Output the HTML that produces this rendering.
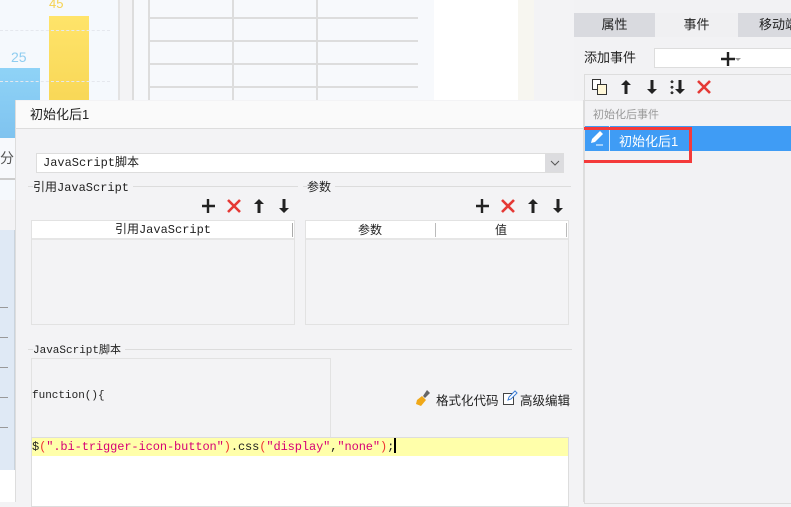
<!DOCTYPE html>
<html><head><meta charset="utf-8"><style>
*{margin:0;padding:0;box-sizing:border-box}
body{width:791px;height:502px;overflow:hidden;position:relative;background:#f3f3f5;font-family:"Liberation Sans","Noto Sans CJK SC",sans-serif;font-size:12px;color:#222}
.a{position:absolute}
.mono{font-family:"Liberation Mono","Noto Sans CJK SC",monospace}
.hl{position:absolute;height:1px;background:#dcdcdc}
</style></head><body>
<svg width="0" height="0" style="position:absolute">
<defs>
<g id="up"><path d="M6 1 L1 6 L4.5 6 L4.5 15 L7.5 15 L7.5 6 L11 6 Z" fill="#222"/></g>
<g id="dn"><path d="M6 15 L1 10 L4.5 10 L4.5 1 L7.5 1 L7.5 10 L11 10 Z" fill="#222"/></g>
<g id="pl"><path d="M6 0 V14 M-1 7 H13" stroke="#222" stroke-width="2.4"/></g>
<g id="x"><path d="M1 1 L13 13 M13 1 L1 13" stroke="#e53935" stroke-width="2.6"/></g>
</defs></svg>
<!-- background left area -->
<div class="a" style="left:0;top:0;width:120px;height:200px;background:#f5f9fd"></div>
<div class="a" style="left:0;top:68px;width:40px;height:70px;background:linear-gradient(#8fd3f7,#7fc3ef)"></div>
<div class="a" style="left:49px;top:16px;width:40px;height:120px;background:linear-gradient(#ffe46a,#f5d24f)"></div>
<div class="a" style="left:49px;top:-4px;color:#f5d24f;font-size:13px">45</div>
<div class="a" style="left:11px;top:49px;color:#8fcdf0;font-size:14px">25</div>
<div class="a" style="left:0;top:30px;width:110px;border-top:1px dashed #e5e8ee"></div>
<div class="a" style="left:0;top:81px;width:110px;border-top:1px dashed #e5e8ee"></div>
<div class="a" style="left:118px;top:0;width:2px;height:100px;background:#e3e3e3"></div>
<div class="a" style="left:132px;top:0;width:2px;height:100px;background:#ddd"></div>
<div class="a" style="left:134px;top:0;width:300px;height:100px;background:#f7f9fc"></div>
<div class="a" style="left:148px;top:0;width:2px;height:100px;background:#ddd"></div>
<div class="a" style="left:232px;top:0;width:2px;height:100px;background:#ddd"></div>
<div class="a" style="left:316px;top:0;width:2px;height:100px;background:#ddd"></div>
<div class="a" style="left:434px;top:0;width:84px;height:100px;background:#fff"></div>
<div class="a" style="left:518px;top:0;width:16px;height:100px;background:#f7f6f0"></div>
<div class="a" style="left:148px;top:17px;width:270px;height:2px;background:#ddd"></div>
<div class="a" style="left:148px;top:40px;width:270px;height:2px;background:#ddd"></div>
<div class="a" style="left:148px;top:63px;width:270px;height:2px;background:#ddd"></div>
<div class="a" style="left:148px;top:86px;width:270px;height:2px;background:#ddd"></div>
<div class="a" style="left:0;top:138px;width:15px;height:40px;background:#f7f9fc;color:#555;font-size:14px;line-height:40px">分</div>
<div class="a" style="left:0;top:178px;width:15px;height:2px;background:#ccc"></div>
<div class="a" style="left:0;top:230px;width:15px;height:240px;background:#dfe9f5;border-right:1px solid #c9d3dd"></div>
<div class="a" style="left:0;top:470px;width:15px;height:32px;background:#fff"></div>
<div class="a" style="left:0;top:307px;width:8px;height:1px;background:#999"></div>
<div class="a" style="left:0;top:337px;width:8px;height:1px;background:#999"></div>
<div class="a" style="left:0;top:367px;width:8px;height:1px;background:#999"></div>
<div class="a" style="left:0;top:397px;width:8px;height:1px;background:#999"></div>
<div class="a" style="left:0;top:427px;width:8px;height:1px;background:#999"></div>

<!-- right panel -->
<div class="a" style="left:574px;top:0;width:217px;height:502px;background:#f2f2f4"></div>
<div class="a" style="left:574px;top:13px;width:81px;height:24px;background:#d9dadf;text-align:center;line-height:24px;font-size:13px">属性</div>
<div class="a" style="left:655px;top:13px;width:83px;height:24px;background:#f0f0f2;text-align:center;line-height:24px;font-size:13px">事件</div>
<div class="a" style="left:738px;top:13px;width:53px;height:24px;background:#d9dadf;line-height:24px;font-size:13px;padding-left:21px;white-space:nowrap;overflow:hidden">移动端</div>
<div class="a" style="left:584px;top:48px;font-size:13px;line-height:20px">添加事件</div>
<div class="a" style="left:654px;top:48px;width:140px;height:20px;background:#fff;border:1px solid #ddd"></div>
<svg class="a" style="left:721px;top:51px" width="20" height="16"><use href="#pl" x="1" y="1"/><path d="M14 7 L20 7 L17 10 Z" fill="#999"/></svg>
<div class="a" style="left:584px;top:74px;width:210px;height:430px;border:1px solid #ddd;background:#f2f2f4"></div>
<div class="a" style="left:585px;top:100px;width:210px;height:1px;background:#ddd"></div>
<div class="a" style="left:592px;top:79px;width:9px;height:11px;border:1px solid #333;background:#fff"></div>
<div class="a" style="left:597px;top:84px;width:10px;height:11px;border:1px solid #333;background:#fff7d8"></div>
<svg class="a" style="left:620px;top:79px" width="12" height="16"><use href="#up"/></svg>
<svg class="a" style="left:646px;top:79px" width="12" height="16"><use href="#dn"/></svg>
<div class="a" style="left:670px;top:79px;width:4px;height:16px;background:radial-gradient(circle,#333 1.3px,transparent 1.6px) 0 0/4px 5.5px"></div>
<svg class="a" style="left:674px;top:79px" width="12" height="16"><use href="#dn"/></svg>
<svg class="a" style="left:697px;top:80px" width="15" height="15"><use href="#x"/></svg>
<div class="a" style="left:593px;top:106px;color:#999;font-size:11px">初始化后事件</div>
<div class="a" style="left:585px;top:126px;width:210px;height:25px;background:#3f9cf5"></div>
<div class="a" style="left:609px;top:126px;width:1px;height:25px;background:#d5e8fb"></div>
<svg class="a" style="left:589px;top:130px" width="16" height="17"><path d="M2 13 L3 9 L11 1 L14 4 L6 12 Z" fill="#fff"/><path d="M7 15 H14" stroke="#fff" stroke-width="1"/></svg>
<div class="a" style="left:619px;top:131px;color:#fff;font-size:13px">初始化后1</div>
<div class="a" style="left:576px;top:127px;width:116px;height:36px;border:3px solid #f43a3a"></div>

<!-- dialog -->
<div class="a" style="left:15px;top:100px;width:569px;height:402px;background:#f3f3f5;border-left:1px solid #ddd;border-right:1px solid #ddd"></div>
<div class="a" style="left:16px;top:101px;width:567px;height:28px;background:#fafafa;border-bottom:1px solid #ddd;font-size:13px;line-height:28px;padding-left:14px">初始化后1</div>
<div class="a mono" style="left:36px;top:153px;width:528px;height:20px;background:#fff;border:1px solid #ddd;line-height:18px;padding-left:6px;font-size:12px">JavaScript脚本</div>
<div class="a" style="left:545px;top:154px;width:19px;height:18px;background:#dcdcdf"></div>
<svg class="a" style="left:550px;top:159px" width="10" height="8"><path d="M1 2 L5 6 L9 2" stroke="#555" fill="none"/></svg>
<div class="hl" style="left:28px;top:186px;width:270px"></div>
<div class="a mono" style="left:33px;top:178px;background:#f3f3f5;padding-right:4px;font-size:12px">引用JavaScript</div>
<div class="hl" style="left:303px;top:186px;width:268px"></div>
<div class="a" style="left:307px;top:178px;background:#f3f3f5;padding-right:4px;font-size:12px">参数</div>
<svg class="a" style="left:202px;top:199px" width="14" height="16"><use href="#pl"/></svg>
<svg class="a" style="left:227px;top:199px" width="15" height="15"><use href="#x"/></svg>
<svg class="a" style="left:253px;top:198px" width="12" height="16"><use href="#up"/></svg>
<svg class="a" style="left:278px;top:198px" width="12" height="16"><use href="#dn"/></svg>
<svg class="a" style="left:476px;top:199px" width="14" height="16"><use href="#pl"/></svg>
<svg class="a" style="left:501px;top:199px" width="15" height="15"><use href="#x"/></svg>
<svg class="a" style="left:527px;top:198px" width="12" height="16"><use href="#up"/></svg>
<svg class="a" style="left:552px;top:198px" width="12" height="16"><use href="#dn"/></svg>
<div class="a" style="left:31px;top:220px;width:264px;height:105px;border:1px solid #e2e2e2;background:#f3f3f5"></div>
<div class="a mono" style="left:32px;top:221px;width:262px;height:19px;background:#fff;border-bottom:2px solid #e6e6e6;text-align:center;line-height:18px;font-size:12px">引用JavaScript</div>
<div class="a" style="left:292px;top:223px;width:1px;height:14px;background:#aaa"></div>
<div class="a" style="left:305px;top:220px;width:264px;height:105px;border:1px solid #e2e2e2;background:#f3f3f5"></div>
<div class="a" style="left:306px;top:221px;width:262px;height:19px;background:#fff;border-bottom:2px solid #e6e6e6;line-height:18px;font-size:12px"><span class="a" style="left:52px">参数</span><span class="a" style="left:189px">值</span></div>
<div class="a" style="left:435px;top:223px;width:1px;height:14px;background:#bbb"></div>
<div class="a" style="left:566px;top:223px;width:1px;height:14px;background:#bbb"></div>
<div class="hl" style="left:28px;top:349px;width:544px"></div>
<div class="a mono" style="left:33px;top:341px;background:#f3f3f5;padding-right:4px;font-size:11px">JavaScript脚本</div>
<div class="a" style="left:31px;top:358px;width:300px;height:80px;border:1px solid #e2e2e2"></div>
<div class="a mono" style="left:32px;top:390px;font-size:11px">function(){</div>
<svg class="a" style="left:415px;top:389px" width="18" height="18"><path d="M12 1 L15 4 L10 9 L8 7 Z" fill="#666"/><path d="M7 7 L11 11 L6 17 L1 15 L2 11 Z" fill="#f0a818"/></svg>
<div class="a" style="left:436px;top:390px;font-size:12.5px">格式化代码</div>
<svg class="a" style="left:502px;top:389px" width="16" height="17"><rect x="1.5" y="4.5" width="10" height="11" fill="#fff" stroke="#444"/><path d="M6 11 L7 8 L13 2 L15 4 L9 10 Z" fill="#fff" stroke="#3a7bd5"/></svg>
<div class="a" style="left:520px;top:390px;font-size:12.5px">高级编辑</div>
<div class="a" style="left:31px;top:437px;width:538px;height:70px;background:#fff;border:1px solid #ddd"></div>
<div class="a" style="left:32px;top:438px;width:536px;height:18px;background:#ffffaa"></div>
<div class="a mono" style="left:32px;top:438px;font-size:12px;line-height:18px;color:#d60076;letter-spacing:-0.1px"><span style="color:#222">$</span><span style="color:#e33">(</span>".bi-trigger-icon-button"<span style="color:#e33">)</span><span style="color:#222">.css</span><span style="color:#e33">(</span>"display"<span style="color:#222">,</span>"none"<span style="color:#e33">)</span><span style="color:#222">;</span><span style="display:inline-block;width:2px;height:15px;background:#000;vertical-align:-3px"></span></div>
</body></html>
